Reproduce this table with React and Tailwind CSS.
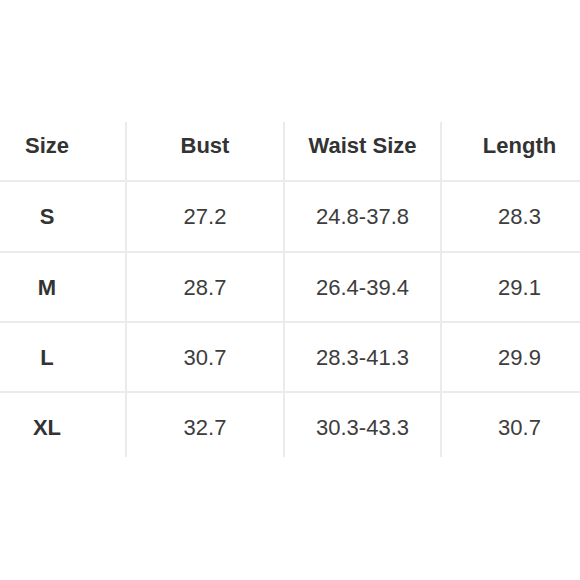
const headers = ['Size', 'Bust', 'Waist Size', 'Length'];

const rows = [
  ['S', '27.2', '24.8-37.8', '28.3'],
  ['M', '28.7', '26.4-39.4', '29.1'],
  ['L', '30.7', '28.3-41.3', '29.9'],
  ['XL', '32.7', '30.3-43.3', '30.7'],
];

const rowHeights = ['h-[71px]', 'h-[70px]', 'h-[70px]', 'h-[64px]'];

function Cell({ children, first, bold, className = '' }) {
  return (
    <div
      className={`flex items-center justify-center ${bold ? 'font-bold text-[22px] text-[#333]' : 'text-[22px] text-[#3d3d3d]'} ${first ? '' : 'border-l-2 border-[#ebebeb]'} ${className}`}
    >
      {children}
    </div>
  );
}

export default function App() {
  return (
    <div
      className="w-[580px] h-[580px] overflow-hidden bg-white pt-[122px]"
      style={{ fontFamily: '"Liberation Sans", Arial, sans-serif' }}
    >
      <div className="ml-[-31px] w-[628px]">
        <div className="grid grid-cols-[156px_158px_157px_157px] h-[60px] border-b-2 border-[#ebebeb]">
          {headers.map((h, i) => (
            <Cell key={h} first={i === 0} bold className="pb-3">
              {h}
            </Cell>
          ))}
        </div>
        {rows.map((r, ri) => (
          <div
            key={r[0]}
            className={`grid grid-cols-[156px_158px_157px_157px] ${rowHeights[ri]} ${ri < rows.length - 1 ? 'border-b-2 border-[#ebebeb]' : ''}`}
          >
            {r.map((v, ci) => (
              <Cell key={ci} first={ci === 0} bold={ci === 0} className={ri === rows.length - 1 ? 'pt-1' : ''}>
                {v}
              </Cell>
            ))}
          </div>
        ))}
      </div>
    </div>
  );
}
